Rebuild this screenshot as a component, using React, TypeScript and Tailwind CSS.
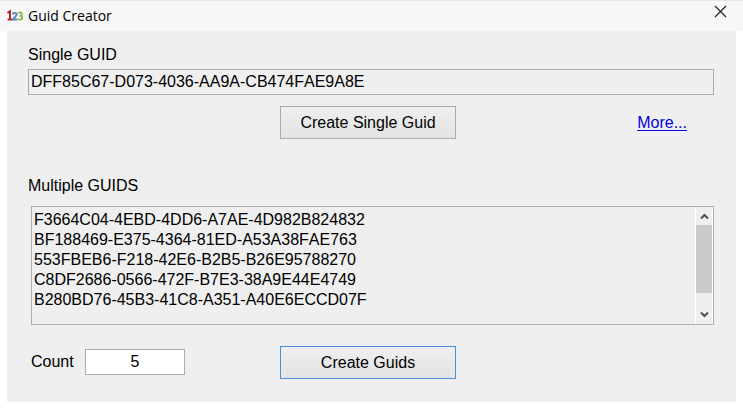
import { useState } from "react";

const INITIAL_GUIDS = [
  "F3664C04-4EBD-4DD6-A7AE-4D982B824832",
  "BF188469-E375-4364-81ED-A53A38FAE763",
  "553FBEB6-F218-42E6-B2B5-B26E95788270",
  "C8DF2686-0566-472F-B7E3-38A9E44E4749",
  "B280BD76-45B3-41C8-A351-A40E6ECCD07F",
];

function newGuid() {
  return crypto.randomUUID().toUpperCase();
}

function AppIcon() {
  return (
    <svg width="16" height="16" viewBox="0 0 16 16" fill="none" aria-hidden="true">
      <path d="M0.4 5 L3 3.4 V11.6 M0.6 11.4 H5.2" stroke="#b3262e" strokeWidth="2" />
      <path d="M5.8 6.6 C6.2 4.2 9.8 4.4 9.6 6.6 C9.4 8.4 6.6 9.2 6.2 11.4 H10.4" stroke="#5b86b8" strokeWidth="2" />
      <path d="M11.2 5.2 C12.6 3.8 15 4.2 14.8 6 C14.7 7.2 13.6 7.8 12.6 7.8 C14.2 7.8 15.4 8.6 15.2 10 C15 12 12.4 12 11 11" stroke="#86b84c" strokeWidth="1.8" />
    </svg>
  );
}

function Chevron({ up = false }: { up?: boolean }) {
  return (
    <svg width="9" height="7" viewBox="0 0 9 7" fill="none" aria-hidden="true">
      <path d={up ? "M1 5.5 L4.5 2 L8 5.5" : "M1 1.5 L4.5 5 L8 1.5"} stroke="#505050" strokeWidth="2" />
    </svg>
  );
}

function PushButton({
  children,
  isDefault = false,
  onClick,
}: {
  children: React.ReactNode;
  isDefault?: boolean;
  onClick: () => void;
}) {
  return (
    <button
      type="button"
      onClick={onClick}
      className={`h-[33px] w-44 shrink-0 border bg-linear-to-b from-[#efefef] to-[#e3e3e3] ${
        isDefault ? "border-[#4a90d9]" : "border-[#acacac]"
      }`}
    >
      {children}
    </button>
  );
}

export default function App() {
  const [single, setSingle] = useState("DFF85C67-D073-4036-AA9A-CB474FAE9A8E");
  const [guids, setGuids] = useState(INITIAL_GUIDS);
  const [count, setCount] = useState("5");

  return (
    <div className="bg-white pb-[7px] font-['Liberation_Sans',Arial,sans-serif] text-base leading-5 text-black">
      <header className="flex h-[31px] items-center border-t border-[#e6e6e6] bg-[#f7f7f7] pr-4 pl-[7px]">
        <AppIcon />
        <h1 className="ml-[5px] font-['Open_Sans',sans-serif] text-sm">Guid Creator</h1>
        <button type="button" aria-label="Close" className="mb-2.5 ml-auto">
          <svg width="13" height="13" viewBox="0 0 13 13" fill="none" aria-hidden="true">
            <path d="M1 1 L12 12 M12 1 L1 12" stroke="#222222" strokeWidth="1.2" />
          </svg>
        </button>
      </header>

      <main className="mx-[7px] bg-[#efefef] pt-3.5 pr-[22px] pb-[23px] pl-[21px]">
        <label htmlFor="single" className="block">Single GUID</label>
        <input
          id="single"
          readOnly
          value={single}
          className="mt-1 block h-[26px] w-full border border-[#acacac] bg-[#efefef] px-0.5 outline-none [font-kerning:none]"
        />

        <div className="mt-[11px] flex items-center pl-[252px]">
          <PushButton onClick={() => setSingle(newGuid())}>Create Single Guid</PushButton>
          <a href="#more" className="mr-[27px] ml-auto text-[#0000e0] underline underline-offset-2">More...</a>
        </div>

        <label htmlFor="multiple" className="mt-[37px] block">Multiple GUIDS</label>
        <div className="mt-2.5 ml-[3px] flex h-[119px] border border-[#acacac]">
          <textarea
            id="multiple"
            readOnly
            value={guids.join("\n")}
            className="min-w-0 flex-1 resize-none overflow-hidden px-0.5 py-[3px] outline-none [font-kerning:none]"
          />
          <div className="flex w-[18px] flex-col border-x border-white">
            <button type="button" aria-label="Scroll up" className="flex h-[18px] items-center justify-center">
              <Chevron up />
            </button>
            <div className="h-[68px] bg-[#cbcbcb]" />
            <button type="button" aria-label="Scroll down" className="mt-auto flex h-5 items-center justify-center">
              <Chevron />
            </button>
          </div>
        </div>

        <div className="mt-[21px] flex items-center">
          <div className="flex w-[252px] shrink-0 items-center pb-px pl-[3px]">
            <label htmlFor="count" className="w-[54px]">Count</label>
            <input
              id="count"
              value={count}
              onChange={(e) => setCount(e.target.value)}
              className="h-[26px] w-[100px] border border-[#acacac] bg-white text-center outline-none"
            />
          </div>
          <PushButton
            isDefault
            onClick={() => setGuids(Array.from({ length: Math.min(Number(count) || 0, 1000) }, newGuid))}
          >
            Create Guids
          </PushButton>
        </div>
      </main>
    </div>
  );
}
